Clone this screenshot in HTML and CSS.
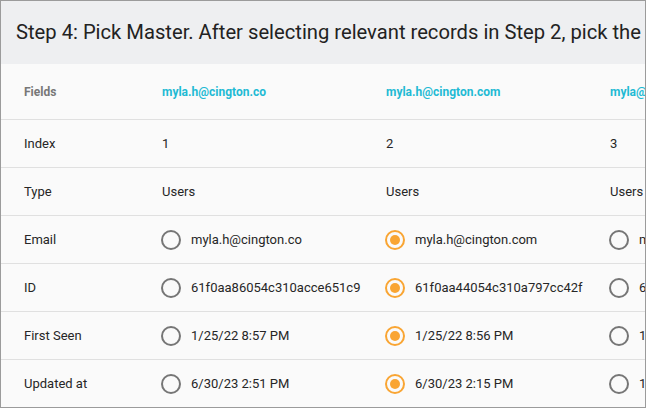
FILE: index.html
```html
<!DOCTYPE html>
<html>
<head>
<meta charset="utf-8">
<link rel="stylesheet" href="styles.css">
</head>
<body>
<div class="frame">
  <div class="title">Step 4: Pick Master. After selecting relevant records in Step 2, pick the master record for each field.</div>
  <div class="table">
    <div class="row head">
      <div class="cell label">Fields</div>
      <div class="cell">myla.h@cington.co</div>
      <div class="cell">myla.h@cington.com</div>
      <div class="cell">myla@cington.com</div>
    </div>
    <div class="row">
      <div class="cell label">Index</div>
      <div class="cell">1</div>
      <div class="cell">2</div>
      <div class="cell">3</div>
    </div>
    <div class="row">
      <div class="cell label">Type</div>
      <div class="cell">Users</div>
      <div class="cell">Users</div>
      <div class="cell">Users</div>
    </div>
    <div class="row">
      <div class="cell label">Email</div>
      <div class="cell"><span class="radio"></span>myla.h@cington.co</div>
      <div class="cell"><span class="radio on"></span>myla.h@cington.com</div>
      <div class="cell"><span class="radio"></span>myla@cington.com</div>
    </div>
    <div class="row">
      <div class="cell label">ID</div>
      <div class="cell"><span class="radio"></span>61f0aa86054c310acce651c9</div>
      <div class="cell"><span class="radio on"></span>61f0aa44054c310a797cc42f</div>
      <div class="cell"><span class="radio"></span>61f0aa8a054c310acce65201</div>
    </div>
    <div class="row">
      <div class="cell label">First Seen</div>
      <div class="cell"><span class="radio"></span>1/25/22 8:57 PM</div>
      <div class="cell"><span class="radio on"></span>1/25/22 8:56 PM</div>
      <div class="cell"><span class="radio"></span>1/25/22 8:55 PM</div>
    </div>
    <div class="row">
      <div class="cell label">Updated at</div>
      <div class="cell"><span class="radio"></span>6/30/23 2:51 PM</div>
      <div class="cell"><span class="radio on"></span>6/30/23 2:15 PM</div>
      <div class="cell"><span class="radio"></span>1/25/22 8:55 PM</div>
    </div>
  </div>
</div>
</body>
</html>
```
FILE: styles.css
```css
html, body {
  margin: 0;
  padding: 0;
  background: #ffffff;
}
.frame {
  width: 646px;
  height: 408px;
  box-sizing: border-box;
  border: 1px solid #9b9b9b;
  overflow: hidden;
  background: #fafafa;
  font-family: Roboto, "Liberation Sans", sans-serif;
}
.title {
  height: 63px;
  line-height: 63px;
  padding-left: 15px;
  background: #eeeff1;
  color: #222222;
  font-size: 20.2px;
  white-space: nowrap;
  overflow: hidden;
}
.table {
  width: 900px;
}
.row {
  display: flex;
  height: 47px;
  border-bottom: 1px solid #e0e0e0;
  align-items: center;
  font-size: 13px;
  color: #262626;
}
.row.head {
  height: 55px;
  font-size: 12px;
  font-weight: 700;
  color: #1fbad4;
}
.cell {
  flex: 0 0 224px;
  box-sizing: border-box;
  padding-left: 23px;
  display: flex;
  align-items: center;
  white-space: nowrap;
}
.cell.label {
  flex: 0 0 138px;
}
.head .cell.label {
  color: #777777;
}
.radio {
  width: 20px;
  height: 20px;
  box-sizing: border-box;
  border: 2px solid #767676;
  border-radius: 50%;
  margin-left: -1px;
  margin-right: 10px;
  flex: 0 0 20px;
  display: flex;
  align-items: center;
  justify-content: center;
}
.radio.on {
  border-color: #f9a533;
}
.radio.on::after {
  content: "";
  width: 10px;
  height: 10px;
  border-radius: 50%;
  background: #f9a533;
}
```
